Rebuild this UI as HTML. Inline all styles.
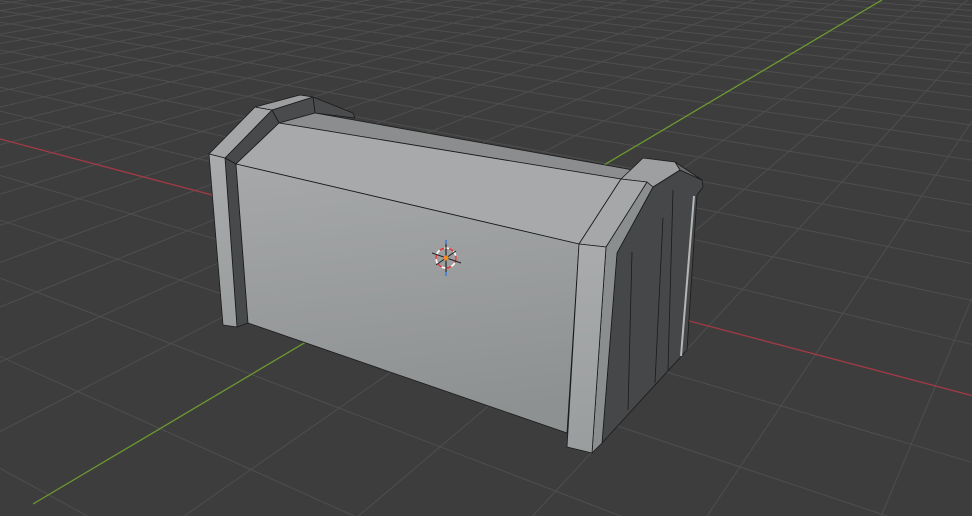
<!DOCTYPE html>
<html><head><meta charset="utf-8"><style>
html,body{margin:0;padding:0;background:#3d3d3d;overflow:hidden;width:972px;height:516px}
svg{display:block;position:absolute;left:0;top:0;overflow:hidden}
</style></head><body>
<svg id="s" width="972" height="516" viewBox="0 0 972 516" xmlns="http://www.w3.org/2000/svg">
<defs>
<clipPath id="cp"><rect width="972" height="516"/></clipPath>
<linearGradient id="fg" x1="0" y1="0" x2="0.15" y2="1">
<stop offset="0" stop-color="#a6a8a9"/><stop offset="1" stop-color="#8e9192"/>
</linearGradient>
<linearGradient id="pg" x1="0" y1="0" x2="0" y2="1">
<stop offset="0" stop-color="#a9abac"/><stop offset="1" stop-color="#9a9d9e"/>
</linearGradient>
</defs>
<rect width="972" height="516" fill="#3d3d3d"/>
<g clip-path="url(#cp)">
<g id="grid" stroke="#4e4e4e" stroke-width="1" fill="none"></g>
<line x1="0" y1="139" x2="972" y2="395.6" stroke="#a23a45" stroke-width="1.3"/>
<line x1="33" y1="504" x2="882" y2="0" stroke="#6c9a2f" stroke-width="1.3"/>
</g>
<g stroke="#1a1a1a" stroke-width="0.8" stroke-linejoin="round">
<polygon points="313,97 353,113 355,118 315,113" fill="#4a4b4c"/>
<polygon points="272,110 313,97 315,113 279,123" fill="#4a4b4c"/>
<polygon points="225,158 272,110 279,123 236,164" fill="#48494a"/>
<polygon points="225,158 236,164 248,323 237,327" fill="#48494a"/>
<polygon points="209,154 255,107 272,110 225,158" fill="#a3a5a6"/>
<polygon points="255,107 300,95 313,97 272,110" fill="#9c9e9f"/>
<polygon points="209,154 225,158 237,327 223,325" fill="url(#pg)"/>
<polygon points="279,123 315,113 633,170 621,179" fill="#8b8d8e"/>
<polygon points="236,164 279,123 621,179 579,244" fill="#a7a9aa"/>
<polygon points="236,164 579,244 567,433 248,323" fill="url(#fg)"/>
<polygon points="617,253 653,187 680,170 702,180 703,187 697,195 687,350 602,443" fill="#464748"/>
<polygon points="675,162 702,180 680,170" fill="#6a6c6d"/>
<polygon points="606,247 647,182 653,187 617,253 602,443 592,453" fill="#8b8e8f"/>
<polygon points="621,179 643,158 675,162 680,170 653,187 647,182" fill="#9d9fa0"/>
<polygon points="579,244 621,179 647,182 606,247" fill="#a5a7a8"/>
<polygon points="579,244 606,247 592,453 567,447" fill="url(#pg)"/>
<line x1="632" y1="252" x2="628" y2="410"/>
<line x1="663" y1="218" x2="655" y2="383"/>
<line x1="673" y1="190" x2="668" y2="370"/>
</g>
<line x1="694" y1="196" x2="681" y2="356" stroke="#b4b6b7" stroke-width="2"/>
<g>
<circle cx="446" cy="258" r="10" fill="none" stroke="#fff" stroke-width="1.6"/>
<circle cx="446" cy="258" r="10" fill="none" stroke="#d83a3a" stroke-width="1.6" stroke-dasharray="5 5"/>
<line x1="446" y1="240" x2="446" y2="276" stroke="#111" stroke-width="1"/>
<line x1="432" y1="253" x2="461" y2="263" stroke="#222" stroke-width="1"/>
<line x1="436" y1="265" x2="456" y2="251" stroke="#222" stroke-width="1"/>
<line x1="446" y1="240" x2="446" y2="244" stroke="#3b7be0" stroke-width="1.5"/>
<line x1="446" y1="272" x2="446" y2="276" stroke="#3b7be0" stroke-width="1.5"/>
<circle cx="446" cy="258" r="2.5" fill="#f08a1c"/>
</g>
</svg>
<script>
(function(){
var a=-0.0466,b=-0.0713,g=document.getElementById('grid'),out='';
function P(u,v){var w=1+a*u+b*v;return [(446+a*u*-1163+b*v*1166)/w,(258+a*u*-168+b*v*-168)/w,w];}
function cl(x){return Math.max(-5,Math.min(977,x));}
function seg(fn){var pts=[];for(var t=-80;t<=20;t+=0.5){var p=fn(t);if(p[2]>0.3&&p[0]>-300&&p[0]<1300&&p[1]>-50&&p[1]<800)pts.push(p[0].toFixed(1)+','+p[1].toFixed(1));}
 return pts.length>1?'<polyline points="'+pts.join(' ')+'"/>':'';}
for(var k=-80;k<=20;k++){
 if(k!==0){
 out+=seg(function(t){return P(k,t);});
 out+=seg(function(t){return P(t,k);});}
}
g.innerHTML=out;
})();
</script>
</body></html>
